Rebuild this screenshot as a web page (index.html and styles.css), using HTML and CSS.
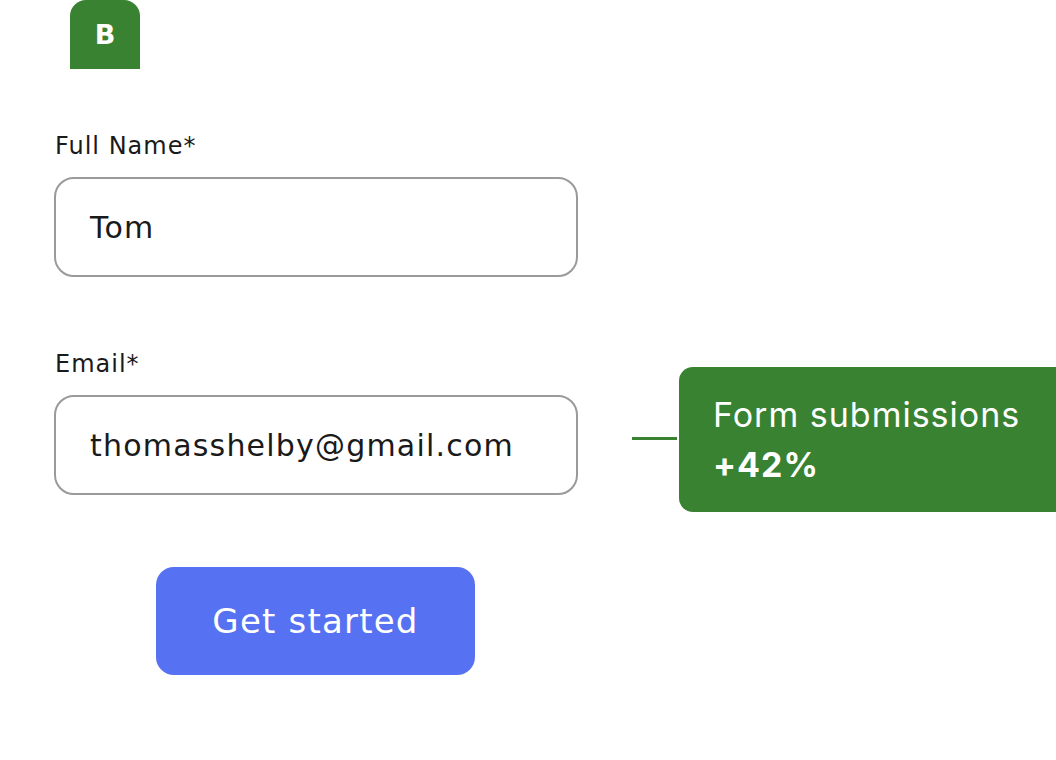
FILE: index.html
```html
<!DOCTYPE html>
<html>
<head>
<meta charset="utf-8">
<link rel="stylesheet" href="styles.css">
</head>
<body>
<div class="page">
  <div class="badge">B</div>
  <form class="form">
    <div class="field">
      <label class="label">Full Name*</label>
      <div class="input">Tom</div>
    </div>
    <div class="field field-email">
      <label class="label">Email*</label>
      <div class="input">thomasshelby@gmail.com</div>
    </div>
    <div class="actions">
      <button type="button" class="btn">Get started</button>
    </div>
  </form>
  <div class="callout-wrap">
    <span class="connector"></span>
    <div class="callout">
      <div class="callout-title">Form submissions</div>
      <div class="callout-value">+42%</div>
    </div>
  </div>
</div>
</body>
</html>
```

FILE: styles.css
```css
html, body {
  margin: 0;
  padding: 0;
  background: #ffffff;
}
.page {
  position: relative;
  width: 1056px;
  height: 760px;
  font-family: "DejaVu Sans", "Noto Sans", sans-serif;
  color: #1a1a1a;
}
.badge {
  margin-left: 70px;
  width: 70px;
  height: 69px;
  background: #388232;
  border-radius: 16px 16px 0 0;
  color: #fff;
  font-weight: 700;
  font-size: 27px;
  display: flex;
  align-items: center;
  justify-content: center;
}
.form {
  margin: 0;
  padding: 62px 0 0 54px;
  width: 524px;
  display: flex;
  flex-direction: column;
}
.field {
  display: flex;
  flex-direction: column;
  gap: 16px;
}
.field-email {
  margin-top: 72px;
}
.label {
  padding-left: 1px;
  font-size: 24px;
  line-height: 30px;
  letter-spacing: 1px;
  color: #1a1a1a;
}
.input {
  box-sizing: border-box;
  height: 100px;
  border: 2px solid #9a9a9a;
  border-radius: 20px;
  padding: 0 34px;
  display: flex;
  align-items: center;
  font-size: 30px;
  letter-spacing: 1.2px;
  color: #1a1a1a;
}
.actions {
  margin-top: 72px;
  padding-left: 102px;
}
.btn {
  width: 319px;
  height: 108px;
  border: none;
  border-radius: 18px;
  background: #5671f1;
  color: #fff;
  font-family: inherit;
  font-size: 34px;
  letter-spacing: 1.2px;
}
.callout-wrap {
  position: absolute;
  left: 632px;
  top: 367px;
  display: flex;
  align-items: center;
}
.connector {
  width: 45px;
  height: 3px;
  background: #388232;
  margin-right: 2px;
  margin-top: -3px;
}
.callout {
  box-sizing: border-box;
  width: 377px;
  height: 145px;
  background: #388232;
  border-radius: 14px 0 0 14px;
  padding: 23px 34px 0;
  color: #fff;
  font-family: Inter, Roboto, sans-serif;
  font-size: 34px;
  line-height: 50px;
  letter-spacing: 1px;
}
.callout-value {
  font-weight: 700;
}
```
